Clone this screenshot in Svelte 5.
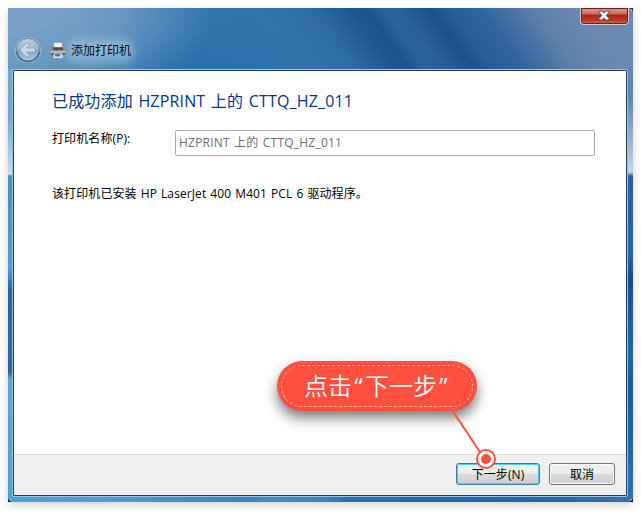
<script>
  const printer = 'HZPRINT 上的 CTTQ_HZ_011';
</script>

<div class="page">
  <div class="window">
    <i class="corner tr"></i><i class="corner br"></i><i class="corner bl"></i>
    <header>
      <svg class="back" width="28" height="28" viewBox="0 0 28 28">
        <defs>
          <linearGradient id="orb" x1="0" y1="0" x2="0" y2="1">
            <stop offset="0" stop-color="#bfd1df" /><stop offset=".45" stop-color="#9bb8cd" />
            <stop offset=".52" stop-color="#7ea2bd" /><stop offset="1" stop-color="#a9cde2" />
          </linearGradient>
        </defs>
        <circle cx="14" cy="14" r="12.4" fill="none" stroke="#a9c5da" stroke-opacity=".5" stroke-width="1.4" />
        <circle cx="14" cy="14" r="11.600" fill="url(#orb)" stroke="#6a8aa5" stroke-width=".9" />
        <path d="M2.600 16a11.600 11.600 0 0 0 22.800 0" fill="none" stroke="#2b4d6d" stroke-width="1.2" />
        <path d="M5.8 14 12.500 7.200h3.700L12 12.100h9v3.800h-9l4.200 4.900h-3.700z" fill="#cbdce8" stroke="#8aa9c0" stroke-width=".8" />
      </svg>
      <svg class="printer" width="16" height="17" viewBox="0 0 16 17">
        <path d="M4 .8h8v6H4z" fill="#f7f8f9" stroke="#b0bac3" stroke-width=".6" />
        <path d="M2.500 5h11l2 2.500v5.300H.5V7.500z" fill="#85888b" />
        <path d="M3.500 5.500h9l1 3h-11z" fill="#4a4d50" />
        <path d="M.5 8.500h15V11H.5z" fill="#b4b6b8" />
        <path d="M1 11h14v2H1z" fill="#56595c" />
        <path d="M4 11.500h8l.8 4.500H3.200z" fill="#eef5fb" stroke="#a0b2c1" stroke-width=".5" />
        <path d="M5 12h3v2.500H5z" fill="#2f79bf" /><path d="M8 12h2.500v2.500H8z" fill="#2f9b63" />
      </svg>
      <span class="title">添加打印机</span>
      <button class="close" aria-label="close">
        <svg width="12" height="11" viewBox="0 0 12 11">
          <path d="M1 1h3.500L6 3l1.500-2H11v1.500L8.300 5.500 11 8.500V10H7.500L6 8l-1.500 2H1V8.500l2.700-3L1 2.500z" fill="#f5f5f5" stroke="#4c4a5b" stroke-width="1" />
        </svg>
      </button>
    </header>
    <main>
      <section>
        <h1>已成功添加 {printer}</h1>
        <div class="field"><label for="name">打印机名称(P):</label><div id="name" class="input">{printer}</div></div>
        <p>该打印机已安装 HP LaserJet 400 M401 PCL 6 驱动程序。</p>
      </section>
      <footer>
        <button class="btn next">下一步(N)</button>
        <button class="btn cancel">取消</button>
      </footer>
    </main>
  </div>
  <div class="callout"><div class="dash">点击<span class="quote">“</span>下一步<span class="quote">”</span></div></div>
  <svg class="pointer" width="50" height="66" viewBox="0 0 50 66">
    <path d="M2 2 30 44" stroke="#ff503f" stroke-width="2" />
    <circle cx="36" cy="51" r="9" fill="#fff" stroke="#ff503f" stroke-width="2" />
    <circle cx="36" cy="51" r="5" fill="#ff503f" />
  </svg>
</div>

<style>
  .page { position: relative; width: 641px; height: 515px; box-sizing: border-box; padding: 8px 0 0 8px; overflow: hidden; background: #fff; font: 12px/18px "Open Sans", "Noto Sans CJK SC", sans-serif; color: #000; }
  .window {
    position: relative; width: 625px; height: 494px; box-sizing: border-box; padding: 0 5px 5px 4px; border-radius: 1px;
    display: flex; flex-direction: column; box-shadow: 0 3px 10px rgba(0,0,0,.18);
    background:
      linear-gradient(90deg, #4aa2d5, #4c9bd0 18%, #3386c2 39%, #438dc9 41%, #3c84c0 51%, #2471b5 54%, #1d68ae 82%, #3570ad) 0 100% / 100% 6px no-repeat,
      linear-gradient(180deg, #78a1c7 0, #71a9d2 110px, #c9deeb 166px, #458fc1 168px, #4ca1d3 260px, #2465a6 282px, #2769aa 335px, #365f9d 364px, #55a8da 371px, #4aa2d5 100%) 0 0 / 6px 100% no-repeat,
      linear-gradient(180deg, #6785ad 0, #6386b1 90px, #c5d5e6 164px, #285f9f 168px, #2c66a7 245px, #194e8b 270px, #2864a5 345px, #1e5796 380px, #3370b0 100%) 100% 0 / 6px 100% no-repeat,
      #2b71ac;
  }
  .corner { position: absolute; width: 3px; height: 3px; }
  .tr { top: 0; right: 0; background: linear-gradient(45deg, #8ba9cb 50%, #172536 50%); }
  .br { bottom: 0; right: 0; background: linear-gradient(135deg, #a8c6df 45%, #101d2d 45%); }
  .bl { bottom: 0; left: 0; background: linear-gradient(225deg, #9dcae4 45%, #172c3c 45%); }
  header {
    height: 61px; flex: none; display: flex; box-sizing: border-box; margin: 0 -5px 0 -4px; padding-left: 7px;
    background:
      radial-gradient(ellipse 210px 100px at 0 0, #7ba1c6 20%, rgba(116,158,197,.8) 55%, rgba(90,140,185,0)),
      radial-gradient(ellipse 160px 60px at 190px 65px, rgba(38,114,174,.8), rgba(38,114,174,0)),
      linear-gradient(54deg, #4c8bbd 0, #3a7db4 15%, #3173ac 30%, #3472ab 45%, #2e6ba4 52%, #1c578f 58%, #1b548c 60%, #2b639c 62.5%, #29619b 65%, #1a518a 69.500%, #285e98 72.500%, #30649d 77%, #5f80aa 85%, #6b88af 91%);
  }
  .back { margin: 28px 7px 0 -1px; }
  .printer { margin: 34px 0 0 1px; }
  .title { margin: 34px 0 0 5px; height: 18px; line-height: 18px; background: rgba(170,202,225,.4); border-radius: 8px; box-shadow: 0 0 8px 4px rgba(170,202,225,.45); text-shadow: 0 0 5px #c3daea; }
  button { font: inherit; padding: 0; }
  .close {
    width: 49px; height: 17px; box-sizing: border-box; margin: 0 4px 0 auto; border: 1px solid #d6c5cb; border-top: 0; border-radius: 0 0 4px 4px;
    box-shadow: inset 0 0 0 1px #701e1b; display: flex; align-items: center; justify-content: center;
    background: linear-gradient(#dda59b 0, #cd665a 6px, #a92715 7px, #bb3926 12px, #d8715a 16px);
  }
  .close svg { margin: -2px 1px 0 0; }
  main { flex: 1; box-sizing: border-box; border: 1px solid #1d3d5a; outline: 1px solid #9bc3e0; margin: 1px; border-radius: 1px; display: flex; flex-direction: column; background: #fff; }
  section { flex: 1; padding: 19px 31px 0 38px; }
  h1 { margin: 0; font-size: 16px; line-height: 22px; font-weight: 400; color: #003399; letter-spacing: .17px; word-spacing: 1.200px; white-space: nowrap; }
  .field { display: flex; margin-top: 18px; }
  label { width: 123px; line-height: 18px; flex: none; letter-spacing: .1px; }
  .input { flex: 1; height: 26px; box-sizing: border-box; border: 1px solid #aaa; border-radius: 2px; padding: 0 3px; line-height: 23px; color: #6d6d6d; letter-spacing: .22px; word-spacing: .900px; }
  p { margin: 29px 0 0; line-height: 18px; white-space: nowrap; letter-spacing: .1px; word-spacing: .800px; }
  footer { height: 41px; flex: none; box-sizing: border-box; border-top: 1px solid #dfdfdf; background: #f0f0f0; display: flex; justify-content: flex-end; gap: 9px; padding: 8px 11px 0 0; }
  .btn { height: 22px; box-sizing: border-box; border: 1px solid #777; border-radius: 3px; box-shadow: inset 0 0 0 1px #fafafa; background: linear-gradient(#f2f2f2 0, #ebebeb 49%, #dcdcdc 50%, #cfcfcf); line-height: 19px; color: #000; }
  .next { width: 84px; border-color: #347faa; box-shadow: inset 0 0 0 1px #4bcff5; letter-spacing: .1px; }
  .cancel { width: 66px; }
  .callout { position: absolute; left: 277px; top: 361px; width: 200px; height: 50px; box-sizing: border-box; padding: 4px; border-radius: 25px; background: #ff503f; box-shadow: 0 7px 13px rgba(0,0,0,.52); }
  .dash { height: 42px; box-sizing: border-box; border: 1px dashed #ffaaa0; border-radius: 21px; display: flex; justify-content: center; color: #fff; font: 350 24px/40px "Open Sans", "Noto Sans CJK SC", sans-serif; white-space: nowrap; }
  .quote { width: 13px; text-align: center; font-weight: 400; }
  .pointer { position: absolute; left: 450px; top: 408px; }
</style>
